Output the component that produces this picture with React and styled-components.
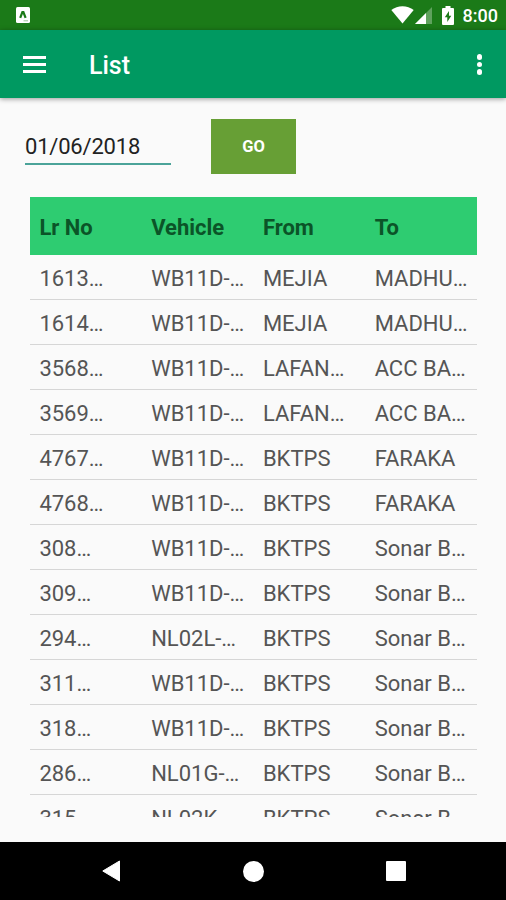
import styled, { createGlobalStyle } from 'styled-components'

const columns = ['Lr No', 'Vehicle', 'From', 'To'];

const rows = [
  ['1613…', 'WB11D-…', 'MEJIA', 'MADHU…'],
  ['1614…', 'WB11D-…', 'MEJIA', 'MADHU…'],
  ['3568…', 'WB11D-…', 'LAFAN…', 'ACC BA…'],
  ['3569…', 'WB11D-…', 'LAFAN…', 'ACC BA…'],
  ['4767…', 'WB11D-…', 'BKTPS', 'FARAKA'],
  ['4768…', 'WB11D-…', 'BKTPS', 'FARAKA'],
  ['308…', 'WB11D-…', 'BKTPS', 'Sonar B…'],
  ['309…', 'WB11D-…', 'BKTPS', 'Sonar B…'],
  ['294…', 'NL02L-…', 'BKTPS', 'Sonar B…'],
  ['311…', 'WB11D-…', 'BKTPS', 'Sonar B…'],
  ['318…', 'WB11D-…', 'BKTPS', 'Sonar B…'],
  ['286…', 'NL01G-…', 'BKTPS', 'Sonar B…'],
  ['315…', 'NL02K…', 'BKTPS', 'Sonar B…'],
];

const App = () => {
  return (
    <Screen>
      <GlobalStyle />
      <StatusBar>
        <svg width="14" height="16" viewBox="0 0 14 16">
          <rect width="14" height="16" rx="1.5" fill="#fff" />
          <path d="M4.2 10.8 L6.4 5 H7.4 L9.6 10.8" fill="none" stroke="#1b7a18" strokeWidth="2.2" />
          <path d="M7.5 13.8 H12" stroke="#9cc59b" strokeWidth="1" />
        </svg>
        <Indicators>
          <svg width="23" height="18" viewBox="0 0 23 18">
            <path d="M0.3 4 C6.5 -1.1 16.5 -1.1 22.7 4 L11.5 17.6 Z" fill="#fff" />
          </svg>
          <SignalIcon width="17" height="17" viewBox="0 0 17 17">
            <path d="M17 0 V17 H0 Z" fill="#fff" opacity="0.3" />
            <path d="M11 6 V17 H0 Z" fill="#fff" />
          </SignalIcon>
          <BatteryIcon width="12" height="19" viewBox="0 0 12 19">
            <path d="M3.5 0 H8.5 V2 H11 Q12 2 12 3 V18 Q12 19 11 19 H1 Q0 19 0 18 V3 Q0 2 1 2 H3.5 Z" fill="#fff" />
            <path d="M7 5 L2.8 11.3 H5.3 V16 L9.3 9.7 H7 Z" fill="#1b7a18" />
          </BatteryIcon>
          <Clock>8:00</Clock>
        </Indicators>
      </StatusBar>

      <AppBar>
        <MenuButton aria-label="Menu">
          <span />
          <span />
          <span />
        </MenuButton>
        <Title>List</Title>
        <MoreButton aria-label="More">
          <span />
          <span />
          <span />
        </MoreButton>
      </AppBar>

      <Content>
        <Filter>
          <DateField>01/06/2018</DateField>
          <GoButton>GO</GoButton>
        </Filter>
        <Table>
          <HeadRow>
            {columns.map((name) => <Cell key={name}>{name}</Cell>)}
          </HeadRow>
          {rows.map((row) => (
            <Row key={row[0]}>
              {row.map((value, i) => <Cell key={i}>{value}</Cell>)}
            </Row>
          ))}
        </Table>
      </Content>

      <SystemNav>
        <svg width="18" height="22" viewBox="0 0 18 22">
          <path d="M17.5 1 V21 L0.8 11 Z" fill="#fff" stroke="#fff" strokeLinejoin="round" />
        </svg>
        <HomeKey />
        <RecentKey />
      </SystemNav>
    </Screen>
  );
}

export default App

const GlobalStyle = createGlobalStyle`
  * {
    box-sizing: border-box;
  }

  body {
    margin: 0;
    font-family: Roboto, sans-serif;
  }
`;

const Screen = styled.div`
  display: flex;
  flex-direction: column;
  width: 506px;
  height: 900px;
  overflow: hidden;
  background: #fafafa;
`;

const StatusBar = styled.div`
  display: flex;
  flex: none;
  justify-content: space-between;
  align-items: center;
  height: 30px;
  padding: 0 8px 0 16px;
  background: #1b7a18;
`;

const Indicators = styled.div`
  display: flex;
  align-items: center;
`;

const SignalIcon = styled.svg`
  margin: 1px 0 0 1px;
`;

const BatteryIcon = styled.svg`
  margin-left: 10px;
`;

const Clock = styled.span`
  margin: 2px 0 0 9px;
  font-size: 18px;
  font-weight: 500;
  line-height: 20px;
  color: #fff;
`;

const AppBar = styled.header`
  display: flex;
  flex: none;
  align-items: center;
  height: 68px;
  padding: 1px 24px 0 23px;
  background: #009961;
  box-shadow: 0 1px 5px rgba(0, 0, 0, 0.4);
`;

const MenuButton = styled.button`
  display: flex;
  flex-direction: column;
  gap: 4px;
  width: 23px;
  padding: 0;
  border: none;
  background: none;

  span {
    height: 3px;
    background: #fff;
  }
`;

const Title = styled.h1`
  margin: 3px auto 0 43px;
  font-size: 25px;
  font-weight: 500;
  line-height: 30px;
  color: #fff;
`;

const MoreButton = styled.button`
  display: flex;
  flex-direction: column;
  gap: 2px;
  padding: 0;
  border: none;
  background: none;

  span {
    width: 5.5px;
    height: 5.5px;
    border-radius: 50%;
    background: #fff;
  }
`;

const Content = styled.main`
  display: flex;
  flex: 1;
  flex-direction: column;
  min-height: 0;
  padding: 21px 29px 25px 25px;
`;

const Filter = styled.div`
  display: flex;
  align-items: flex-start;
  gap: 40px;
  height: 78px;
`;

const DateField = styled.div`
  width: 146px;
  height: 46px;
  padding-top: 14px;
  border-bottom: 2px solid #4ba399;
  font-size: 22px;
  letter-spacing: -0.2px;
  line-height: 28px;
  color: #222;
`;

const GoButton = styled.button`
  width: 85px;
  height: 55px;
  padding: 0;
  border: none;
  background: #679f35;
  font-family: inherit;
  font-size: 16.5px;
  font-weight: 700;
  color: #fff;
`;

const Table = styled.div`
  flex: 1;
  min-height: 0;
  margin-left: 5px;
  overflow: hidden;
`;

const Row = styled.div`
  display: grid;
  grid-template-columns: repeat(4, 1fr);
  align-items: center;
  height: 45px;
  padding-top: 3px;
  border-bottom: 1px solid #d6d6d6;
  font-size: 22px;
  color: #555;
`;

const HeadRow = styled(Row)`
  height: 58px;
  padding-top: 4px;
  border: none;
  background: #2ecc71;
  font-weight: 700;
  color: #0b5428;
`;

const Cell = styled.div`
  padding-left: 9.4px;
  line-height: 28px;
  white-space: nowrap;
`;

const SystemNav = styled.nav`
  display: flex;
  flex: none;
  justify-content: space-between;
  align-items: center;
  height: 58px;
  padding: 0 100px 0 102px;
  background: #000;
`;

const HomeKey = styled.span`
  width: 21px;
  height: 21px;
  border-radius: 50%;
  background: #fff;
`;

const RecentKey = styled.span`
  width: 20px;
  height: 20px;
  border-radius: 1px;
  background: #fff;
`;
